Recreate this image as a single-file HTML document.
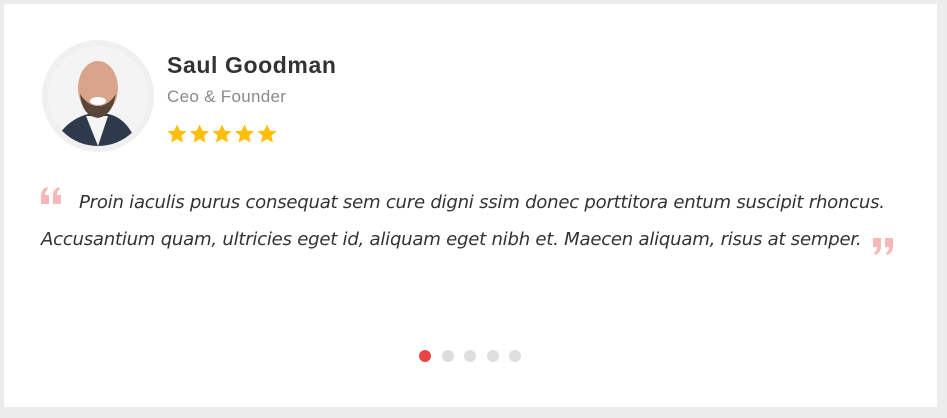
<!DOCTYPE html>
<html><head><meta charset="utf-8"><style>
html,body{margin:0;padding:0}
body{width:947px;height:418px;background:#ececec;position:relative;overflow:hidden;font-family:"Liberation Sans",sans-serif}
.card{position:absolute;left:4px;top:4px;width:933px;height:403px;background:#fff}
.av{position:absolute;left:42px;top:40px;width:112px;height:112px;border-radius:50%;background:#f0f0f0;overflow:hidden}
.av .in{position:absolute;left:6px;top:6px;width:100px;height:100px;border-radius:50%;background:#f4f4f4;overflow:hidden}
.name{position:absolute;left:167px;top:52px;font-size:23px;font-weight:bold;color:#333;letter-spacing:0.6px}
.role{position:absolute;left:167px;top:87px;font-size:17px;color:#8a8a8a;letter-spacing:0.3px}
.stars{position:absolute;left:167px;top:124px}
.q{position:absolute;left:41px;top:184px;width:870px;font-style:italic;font-family:"DejaVu Sans","Liberation Sans",sans-serif;font-size:18.1px;color:#333;line-height:37px;letter-spacing:-0.25px;white-space:nowrap}
.qm{position:absolute}
.dot{position:absolute;top:350px;width:12px;height:12px;border-radius:50%;background:#dedede}
</style></head><body>
<div class="card"></div>
<div class="av"><div class="in">
<svg width="100" height="100" viewBox="0 0 100 100">
<path d="M5 100 Q15 75 40 68 L60 68 Q80 72 90 100Z" fill="#2e3a4c"/>
<path d="M38 70 L50 100 L60 70Z" fill="#f5f5f5"/>
<ellipse cx="50" cy="42" rx="20" ry="27" fill="#d9a48c"/>
<path d="M32 48 Q34 70 50 72 Q64 70 68 48 Q60 60 50 60 Q40 60 32 48Z" fill="#5a4638"/>
<ellipse cx="50" cy="55" rx="8" ry="4" fill="#fff"/>
</svg></div></div>
<div class="name">Saul Goodman</div>
<div class="role">Ceo &amp; Founder</div>
<svg class="stars" width="112" height="20" viewBox="0 0 112 20" fill="#fbbf0c">
<defs><path id="s" d="M10 0.5 L12.9 6.6 L19.5 7.3 L14.5 11.8 L15.9 18.5 L10 15.1 L4.1 18.5 L5.5 11.8 L0.5 7.3 L7.1 6.6Z"/></defs>
<use href="#s" x="0"/><use href="#s" x="22.5"/><use href="#s" x="45"/><use href="#s" x="67.5"/><use href="#s" x="90"/>
</svg>
<svg class="qm" style="left:41px;top:187px" width="22" height="17" viewBox="0 0 22 17" fill="#f6b8b6">
<path d="M0 17 V9 Q0 2 6 0 L7 2 Q4 4 4 8 H8 V17Z"/><path d="M12 17 V9 Q12 2 18 0 L19 2 Q16 4 16 8 H20 V17Z"/>
</svg>
<div class="q"><span style="display:inline-block;width:38px"></span>Proin iaculis purus consequat sem cure digni ssim donec porttitora entum suscipit rhoncus.<br>Accusantium quam, ultricies eget id, aliquam eget nibh et. Maecen aliquam, risus at semper.</div>
<svg class="qm" style="left:873px;top:238px" width="20" height="17" viewBox="0 0 20 17" fill="#f6b8b6">
<path d="M0 0 H8 V8 Q8 15 2 17 L1 15 Q4 13 4 9 H0Z"/><path d="M12 0 H20 V8 Q20 15 14 17 L13 15 Q16 13 16 9 H12Z"/>
</svg>
<div class="dot" style="left:419px;background:#e84545"></div>
<div class="dot" style="left:442px"></div>
<div class="dot" style="left:464px"></div>
<div class="dot" style="left:487px"></div>
<div class="dot" style="left:509px"></div>
</body></html>
